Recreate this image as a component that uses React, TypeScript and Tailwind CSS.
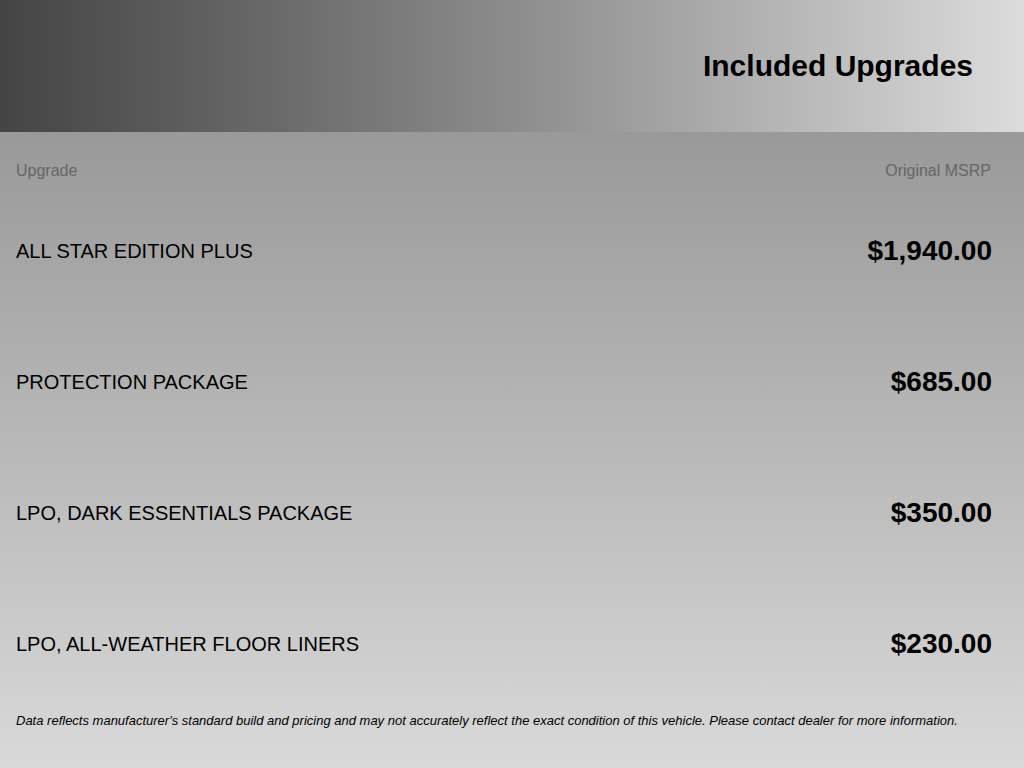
import React from "react";

const upgrades = [
  { name: "ALL STAR EDITION PLUS", price: "$1,940.00" },
  { name: "PROTECTION PACKAGE", price: "$685.00" },
  { name: "LPO, DARK ESSENTIALS PACKAGE", price: "$350.00" },
  { name: "LPO, ALL-WEATHER FLOOR LINERS", price: "$230.00" },
];

const App = () => {
  return (
    <div className="min-h-screen flex flex-col font-['Liberation_Sans',Arial,sans-serif]">
      <div className="h-[132px] bg-gradient-to-r from-[#444444] to-[#dcdcdc] flex items-center justify-end pr-[51px]">
        <h1 className="text-[30px] font-bold text-black leading-none">
          Included Upgrades
        </h1>
      </div>

      <div className="flex-1 bg-gradient-to-b from-[#999999] to-[#d9d9d9] pl-4 pr-8 pt-[27px]">
        <div className="flex justify-between text-[16px] leading-6 text-[#666666]">
          <span>Upgrade</span>
          <span className="mr-px">Original MSRP</span>
        </div>

        <div className="mt-[2px]">
          {upgrades.map((u, i) => (
            <div key={i} className="h-[131px] flex items-center justify-between">
              <span className="text-[20px] text-black">{u.name}</span>
              <span className="text-[28px] font-bold text-black">{u.price}</span>
            </div>
          ))}
        </div>

        <p className="mt-[3px] text-[13px] leading-[18px] italic text-black">
          Data reflects manufacturer's standard build and pricing and may not
          accurately reflect the exact condition of this vehicle. Please contact
          dealer for more information.
        </p>
      </div>
    </div>
  );
};

export default App;
